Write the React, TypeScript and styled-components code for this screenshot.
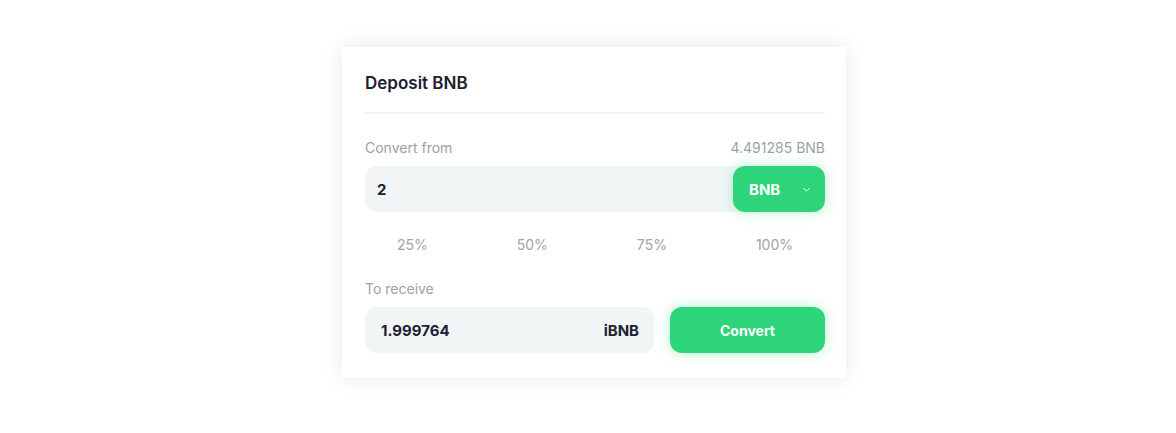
import styled, { createGlobalStyle } from "styled-components";

const GlobalStyle = createGlobalStyle`
  html, body {
    margin: 0;
    min-height: 100%;
    background: #ffffff;
    font-family: Inter, "Noto Sans", "Liberation Sans", sans-serif;
  }
`;

const percents = ["25%", "50%", "75%", "100%"];

const ChevronDown = () => (
  <svg width="11" height="11" viewBox="0 0 10 10" fill="none">
    <path d="M2.5 4l2.5 2.5L7.5 4" stroke="#ffffff" strokeWidth="0.9" strokeLinecap="round" strokeLinejoin="round" />
  </svg>
);

export default function App() {
  return (
    <>
      <GlobalStyle />
      <Page>
        <Card>
          <Title>Deposit BNB</Title>
          <Divider />

          <LabelRow>
            <Label>Convert from</Label>
            <Label>4.491285 BNB</Label>
          </LabelRow>
          <InputBox>
            <Amount>2</Amount>
            <TokenButton>
              BNB
              <ChevronDown />
            </TokenButton>
          </InputBox>

          <PercentRow>
            {percents.map(p => (
              <Percent key={p}>{p}</Percent>
            ))}
          </PercentRow>

          <LabelRow>
            <Label>To receive</Label>
          </LabelRow>
          <ReceiveRow>
            <OutputBox>
              <Amount $pad={16}>1.999764</Amount>
              <Unit>iBNB</Unit>
            </OutputBox>
            <ConvertButton>Convert</ConvertButton>
          </ReceiveRow>
        </Card>
      </Page>
    </>
  );
}

const Page = styled.main`
  display: flex;
  justify-content: center;
  align-items: flex-start;
  min-height: 433px;
  box-sizing: border-box;
  padding: 47px 0 55px 12px;
`;

const Card = styled.section`
  width: 504px;
  box-sizing: border-box;
  padding: 24px 21px 25px 23px;
  background: #ffffff;
  box-shadow: 0 0 20px rgba(0, 0, 0, 0.1);
  display: flex;
  flex-direction: column;
`;

const Title = styled.h2`
  margin: 0;
  font-size: 17px;
  line-height: 24px;
  font-weight: 600;
  color: #1c2230;
`;

const Divider = styled.hr`
  margin: 17px 0 24px;
  border: none;
  height: 2px;
  background: #eff3f4;
`;

const LabelRow = styled.div`
  display: flex;
  justify-content: space-between;
  margin-bottom: 8px;
`;

const Label = styled.span`
  font-size: 14px;
  line-height: 20px;
  color: #9ca1a6;
`;

const InputBox = styled.div`
  display: flex;
  align-items: center;
  justify-content: space-between;
  height: 46px;
  border-radius: 12px;
  background: #f2f5f6;
`;

const Amount = styled.span<{ $pad?: number }>`
  padding-left: ${p => p.$pad ?? 12}px;
  font-size: 15px;
  font-weight: 700;
  color: #1c2230;
`;

const TokenButton = styled.button`
  display: flex;
  align-items: center;
  justify-content: space-between;
  width: 92px;
  height: 46px;
  box-sizing: border-box;
  padding: 0 13px 0 16px;
  border: none;
  border-radius: 12px;
  background: #2ed47a;
  color: #ffffff;
  font-family: inherit;
  font-size: 15px;
  font-weight: 700;
  box-shadow: 0 0 14px rgba(46, 212, 122, 0.35);
`;

const PercentRow = styled.div`
  display: flex;
  justify-content: space-between;
  padding: 0 32px;
  margin: 23px 0 24px;
`;

const Percent = styled.span`
  font-size: 14px;
  line-height: 20px;
  color: #a0a4a9;
  cursor: pointer;
`;

const ReceiveRow = styled.div`
  display: flex;
  gap: 16px;
`;

const OutputBox = styled(InputBox)`
  flex: 0 0 289px;
  padding-right: 15px;
  box-sizing: border-box;
`;

const Unit = styled.span`
  font-size: 15px;
  font-weight: 700;
  color: #1c2230;
`;

const ConvertButton = styled.button`
  flex: 1;
  height: 46px;
  border: none;
  border-radius: 12px;
  background: #2ed47a;
  color: #ffffff;
  font-family: inherit;
  font-size: 14px;
  font-weight: 700;
  box-shadow: 0 0 14px rgba(46, 212, 122, 0.35);
`;
